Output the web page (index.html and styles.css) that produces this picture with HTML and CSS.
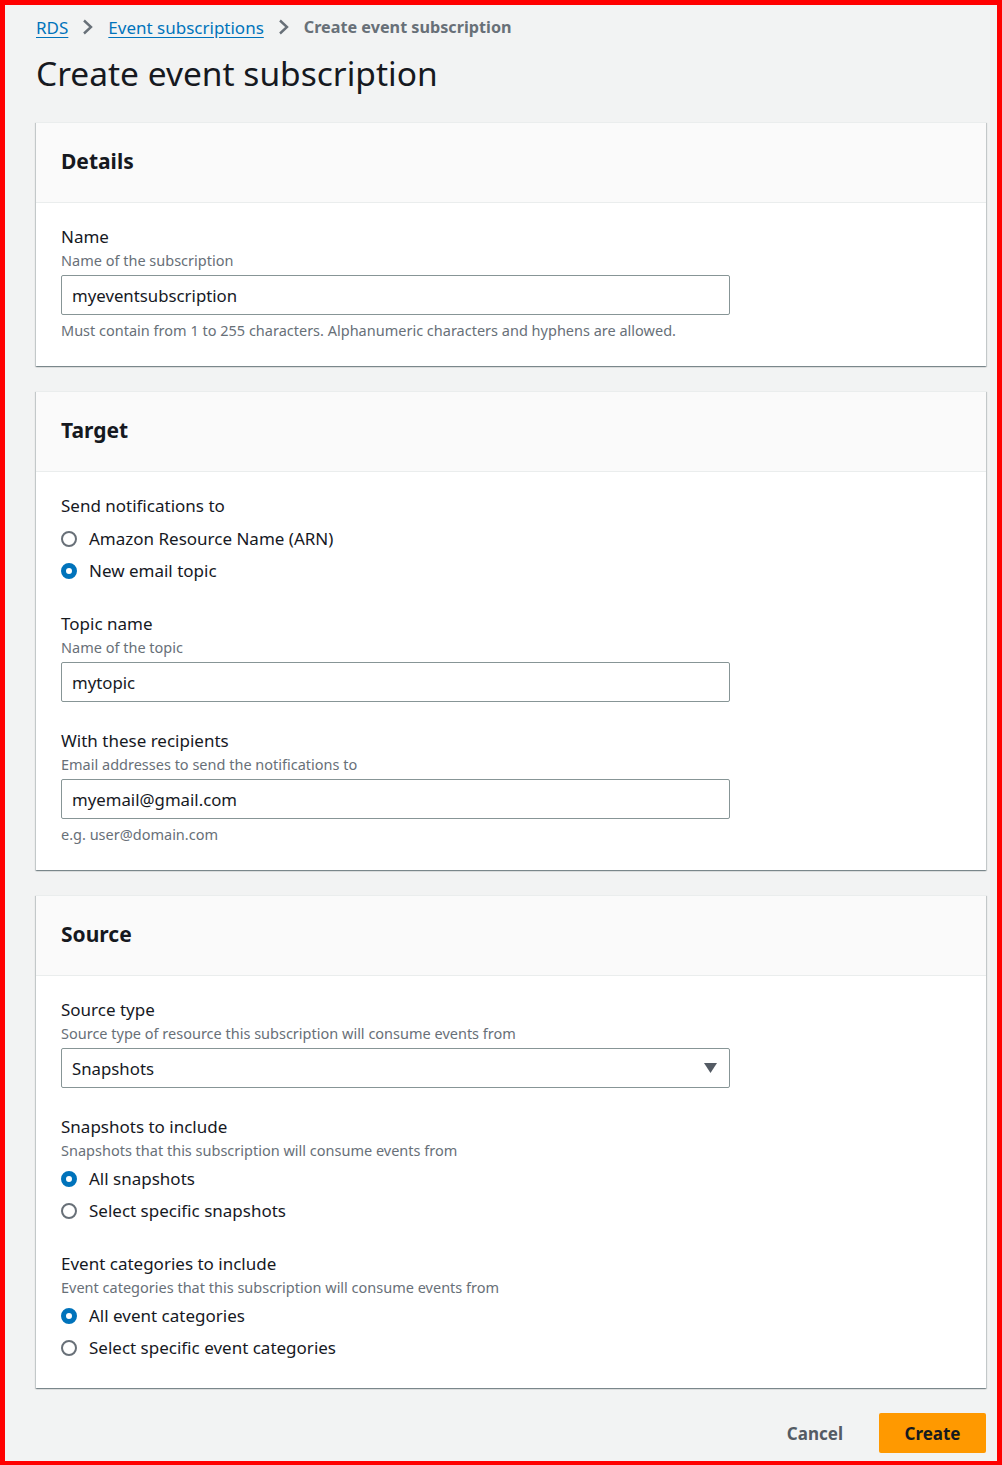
FILE: index.html
```html
<!DOCTYPE html>
<html lang="en">
<head>
<meta charset="utf-8">
<title>Create event subscription</title>
<link rel="stylesheet" href="styles.css">
</head>
<body>
<div class="frame">
  <nav class="breadcrumbs">
    <a href="#" class="crumb-link">RDS</a>
    <svg class="chev" width="12" height="16" viewBox="0 0 12 16"><path d="M2 1.5 L9 8 L2 14.5" fill="none" stroke="#687078" stroke-width="2.4"/></svg>
    <a href="#" class="crumb-link">Event subscriptions</a>
    <svg class="chev" width="12" height="16" viewBox="0 0 12 16"><path d="M2 1.5 L9 8 L2 14.5" fill="none" stroke="#687078" stroke-width="2.4"/></svg>
    <span class="crumb-current">Create event subscription</span>
  </nav>
  <h1 class="page-title">Create event subscription</h1>

  <section class="card">
    <header class="card-header"><h2>Details</h2></header>
    <div class="card-body">
      <div class="field">
        <div class="label">Name</div>
        <div class="desc">Name of the subscription</div>
        <div class="input">myeventsubscription</div>
        <div class="hint">Must contain from 1 to 255 characters. Alphanumeric characters and hyphens are allowed.</div>
      </div>
    </div>
  </section>

  <section class="card">
    <header class="card-header"><h2>Target</h2></header>
    <div class="card-body">
      <div class="field">
        <div class="label">Send notifications to</div>
        <div class="radios">
          <div class="radio"><span class="dot"></span>Amazon Resource Name (ARN)</div>
          <div class="radio"><span class="dot on"></span>New email topic</div>
        </div>
      </div>
      <div class="field">
        <div class="label">Topic name</div>
        <div class="desc">Name of the topic</div>
        <div class="input">mytopic</div>
      </div>
      <div class="field">
        <div class="label">With these recipients</div>
        <div class="desc">Email addresses to send the notifications to</div>
        <div class="input">myemail@gmail.com</div>
        <div class="hint">e.g. user@domain.com</div>
      </div>
    </div>
  </section>

  <section class="card">
    <header class="card-header"><h2>Source</h2></header>
    <div class="card-body">
      <div class="field">
        <div class="label">Source type</div>
        <div class="desc">Source type of resource this subscription will consume events from</div>
        <div class="input select">Snapshots<svg class="caret" width="13" height="10" viewBox="0 0 13 10"><path d="M0 0 H13 L6.5 10 Z" fill="#545b64"/></svg></div>
      </div>
      <div class="field">
        <div class="label">Snapshots to include</div>
        <div class="desc">Snapshots that this subscription will consume events from</div>
        <div class="radios">
          <div class="radio"><span class="dot on"></span>All snapshots</div>
          <div class="radio"><span class="dot"></span>Select specific snapshots</div>
        </div>
      </div>
      <div class="field">
        <div class="label">Event categories to include</div>
        <div class="desc">Event categories that this subscription will consume events from</div>
        <div class="radios">
          <div class="radio"><span class="dot on"></span>All event categories</div>
          <div class="radio"><span class="dot"></span>Select specific event categories</div>
        </div>
      </div>
    </div>
  </section>

  <div class="actions">
    <button class="btn-link">Cancel</button>
    <button class="btn-primary">Create</button>
  </div>
</div>
</body>
</html>
```

FILE: styles.css
```css
* { box-sizing: border-box; }
html, body { margin: 0; padding: 0; }
body {
  font-family: "Noto Sans", "Open Sans", sans-serif;
  color: #16191f;
  background: #f2f3f3;
}
.frame {
  border: 5px solid #ff0000;
  min-height: 1465px;
  padding: 9px 11px 8px 31px;
  background: #f2f3f3;
}
.breadcrumbs {
  display: flex;
  align-items: center;
  height: 26px;
  font-size: 17px;
}
.crumb-link { color: #0073bb; text-decoration: underline; text-underline-offset: 3px; }
.chev { flex: none; margin: 0 14px 0 14px; }
.crumb-current { color: #687078; font-weight: 700; font-size: 16.2px; }
.page-title {
  font-size: 33.5px;
  font-weight: 400;
  margin: 9px 0 0;
  line-height: 48px;
  color: #16191f;
}
.card {
  background: #fff;
  margin-top: 25px;
  border-top: 1px solid #eaeded;
  box-shadow: 0 1px 1px 0 rgba(0,28,36,.3), 1px 1px 1px 0 rgba(0,28,36,.15), -1px 1px 1px 0 rgba(0,28,36,.15);
}
.card + .card { margin-top: 25px; }
.card-header {
  background: #fafafa;
  border-bottom: 1px solid #eaeded;
  height: 80px;
  display: flex;
  align-items: center;
  padding: 0 25px 4px;
}
.card-header h2 { margin: 0; font-size: 21px; font-weight: 700; color: #16191f; }
.card-body { padding: 22px 25px 26px; display: flex; flex-direction: column; gap: 27px; }
.label { font-size: 17px; line-height: 23px; color: #16191f; }
.desc { font-size: 14.5px; line-height: 24px; color: #687078; }
.hint { font-size: 14.5px; line-height: 20px; color: #687078; margin-top: 5px; }
.input {
  width: 669px;
  height: 40px;
  border: 1px solid #879596;
  border-radius: 2px;
  margin-top: 3px;
  padding: 0 10px;
  display: flex;
  align-items: center;
  font-size: 16.8px;
  color: #16191f;
}
.select { justify-content: space-between; padding-right: 12px; }
.radios { display: flex; flex-direction: column; gap: 8px; margin-bottom: 2px; }
.label + .radios { margin-top: 10px; }
.desc + .radios { margin-top: 5px; }
.radio { display: flex; align-items: center; gap: 12px; font-size: 17px; line-height: 24px; }
.dot {
  width: 16px; height: 16px; border-radius: 50%;
  border: 2px solid #687078;
  background: #fff;
  flex: none;
}
.dot.on { border: 5px solid #0073bb; }
.actions {
  display: flex;
  justify-content: flex-end;
  align-items: center;
  gap: 20px;
  margin-top: 25px;
}
.btn-link, .btn-primary {
  font-family: inherit;
  font-size: 17px;
  font-weight: 700;
  border: none;
  cursor: pointer;
}
.btn-link { background: none; color: #545b64; padding: 0 16px; }
.btn-primary {
  background: #ff9900;
  color: #16191f;
  width: 107px;
  height: 40px;
  border-radius: 2px;
}
```
